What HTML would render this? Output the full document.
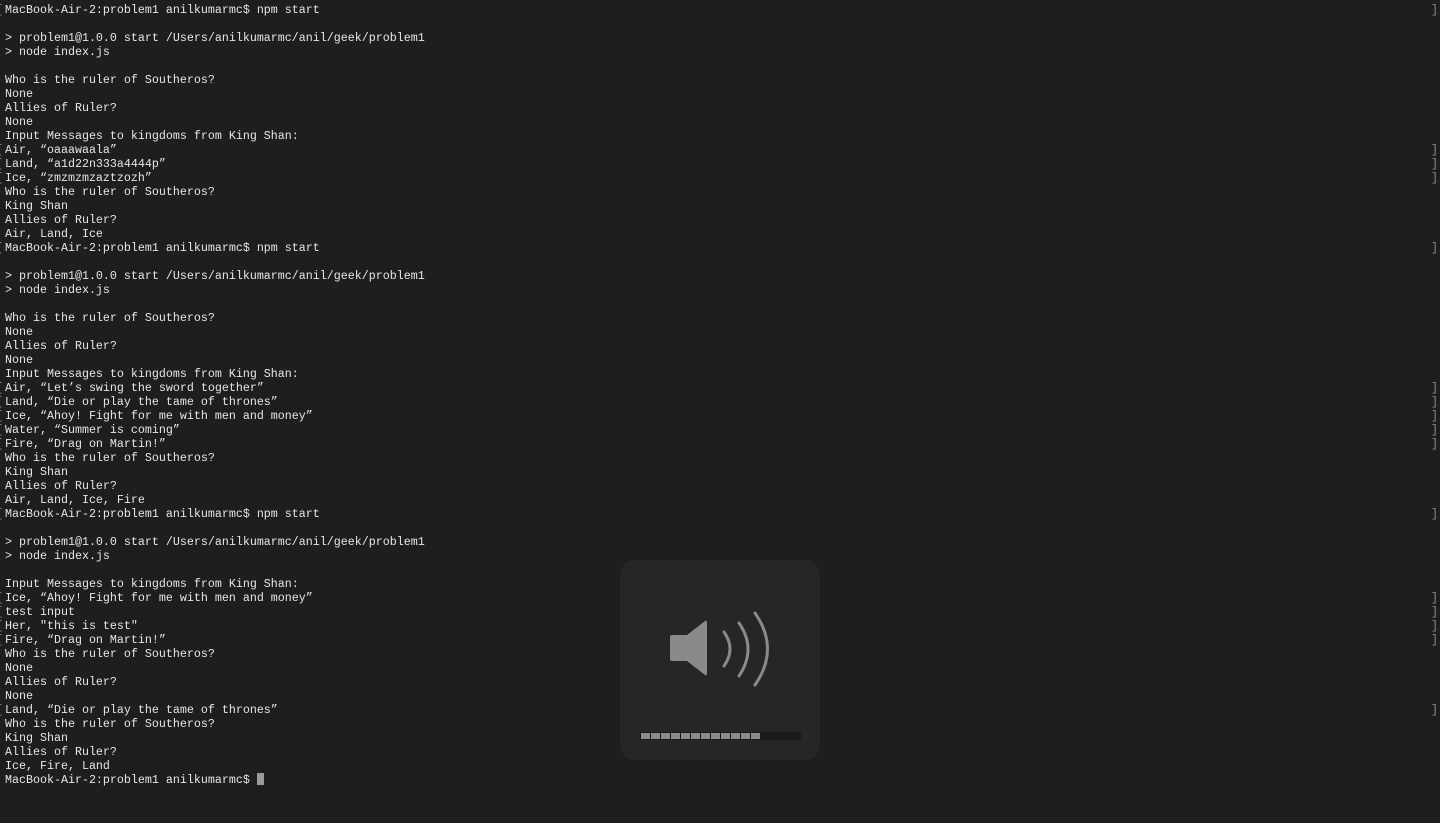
<!DOCTYPE html>
<html><head><meta charset="utf-8"><style>
html,body{margin:0;padding:0;background:#1e1e1e;width:1440px;height:823px;overflow:hidden}
pre{position:absolute;left:5px;top:3px;margin:0;font-family:"Liberation Mono",monospace;font-size:11.67px;line-height:14px;color:#e6e6e6;white-space:pre}
.b{position:absolute;font-family:"Liberation Mono",monospace;font-size:11.67px;line-height:14px;color:#8a8a8a}
.cur{display:inline-block;width:7px;height:12px;background:#9a9a9a;vertical-align:-2px}
.hud{position:absolute;left:620px;top:560px;width:200px;height:200px;border-radius:15px;background:#262626}
</style></head><body>
<pre>MacBook-Air-2:problem1 anilkumarmc$ npm start

&gt; problem1@1.0.0 start /Users/anilkumarmc/anil/geek/problem1
&gt; node index.js

Who is the ruler of Southeros?
None
Allies of Ruler?
None
Input Messages to kingdoms from King Shan:
Air, “oaaawaala”
Land, “a1d22n333a4444p”
Ice, “zmzmzmzaztzozh”
Who is the ruler of Southeros?
King Shan
Allies of Ruler?
Air, Land, Ice
MacBook-Air-2:problem1 anilkumarmc$ npm start

&gt; problem1@1.0.0 start /Users/anilkumarmc/anil/geek/problem1
&gt; node index.js

Who is the ruler of Southeros?
None
Allies of Ruler?
None
Input Messages to kingdoms from King Shan:
Air, “Let’s swing the sword together”
Land, “Die or play the tame of thrones”
Ice, “Ahoy! Fight for me with men and money”
Water, “Summer is coming”
Fire, “Drag on Martin!”
Who is the ruler of Southeros?
King Shan
Allies of Ruler?
Air, Land, Ice, Fire
MacBook-Air-2:problem1 anilkumarmc$ npm start

&gt; problem1@1.0.0 start /Users/anilkumarmc/anil/geek/problem1
&gt; node index.js

Input Messages to kingdoms from King Shan:
Ice, “Ahoy! Fight for me with men and money”
test input
Her, "this is test"
Fire, “Drag on Martin!”
Who is the ruler of Southeros?
None
Allies of Ruler?
None
Land, “Die or play the tame of thrones”
Who is the ruler of Southeros?
King Shan
Allies of Ruler?
Ice, Fire, Land
MacBook-Air-2:problem1 anilkumarmc$ <span class="cur"></span></pre>
<div id="br"></div>
<div class="hud">
<svg width="200" height="200" viewBox="0 0 200 200">
<path d="M52 75 h15 l18 -14 q2 -1 2 1 v52 q0 2 -2 1 l-18 -14 h-15 q-2 0 -2 -2 v-22 q0 -2 2 -2z" fill="#8a8a8a"/>
<g fill="none" stroke="#8a8a8a" stroke-width="3" stroke-linecap="round">
<path d="M104 72 q12 17 0 34"/>
<path d="M119 63 q18 26 0 53"/>
<path d="M135 53 q25 36 0 72"/>
</g>
<rect x="20" y="172" width="161" height="8" fill="#1b1b1b"/>
<g fill="#8a8a8a">
<rect x="21" y="173" width="9" height="6"/><rect x="31" y="173" width="9" height="6"/><rect x="41" y="173" width="9" height="6"/><rect x="51" y="173" width="9" height="6"/><rect x="61" y="173" width="9" height="6"/><rect x="71" y="173" width="9" height="6"/><rect x="81" y="173" width="9" height="6"/><rect x="91" y="173" width="9" height="6"/><rect x="101" y="173" width="9" height="6"/><rect x="111" y="173" width="9" height="6"/><rect x="121" y="173" width="9" height="6"/><rect x="131" y="173" width="9" height="6"/>
</g>
</svg>
</div>
<script>
var L=[0,10,11,12,17,27,28,29,30,31,36,42,43,44,45,50],h='';
L.forEach(function(i){var t=3+14*i;h+='<div class="b" style="left:-4px;top:'+t+'px">[</div><div class="b" style="left:1431px;top:'+t+'px">]</div>';});
document.getElementById('br').innerHTML=h;
</script>
</body></html>
